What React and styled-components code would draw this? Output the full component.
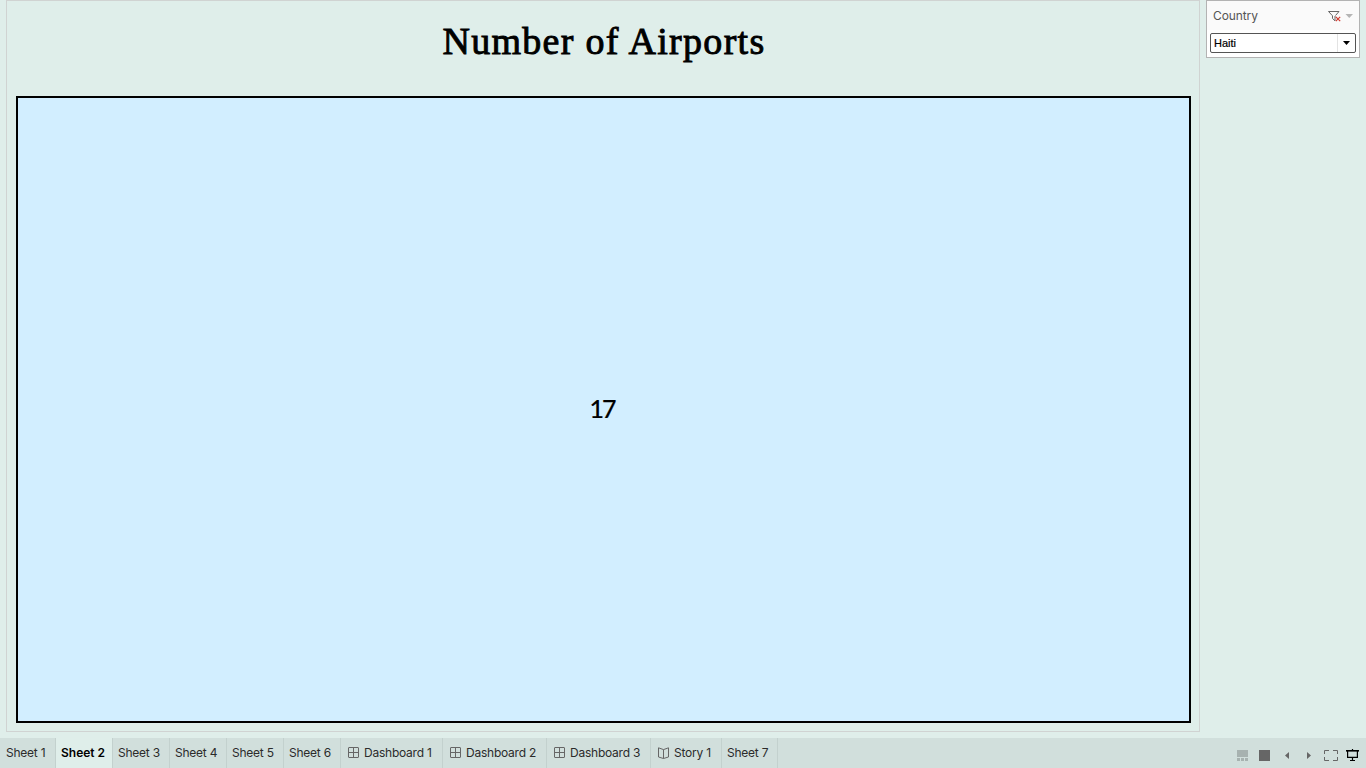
import React from 'react';
import styled, { createGlobalStyle } from 'styled-components';

const Global = createGlobalStyle`
  * { box-sizing: border-box; }
  body { margin: 0; background: #dfeeea; font-family: Inter, "Liberation Sans", sans-serif; overflow: hidden; }
  svg { display: block; flex: none; }
`;
const Page = styled.div`
  width: 1366px; height: 768px; display: flex; flex-direction: column; background: #dfeeea;
`;
const Content = styled.main`
  height: 732px; display: flex; align-items: flex-start; gap: 6px; padding-left: 6px; margin-bottom: 6px;
`;
const Sheet = styled.section`
  width: 1194px; height: 732px; border: 1px solid #d0d3d2; padding: 0 8px 8px 9px;
  display: flex; flex-direction: column;
`;
const Title = styled.h1`
  margin: 0; height: 95px; padding: 18px 0 0 1px; text-align: center; white-space: nowrap;
  font: 400 38px/44px "Liberation Serif", serif; letter-spacing: 1.3px; color: #000;
  -webkit-text-stroke: 0.9px #000;
`;
const Plot = styled.div`
  flex: 1; border: 2px solid #000; background: #d2eeff; display: flex; align-items: center; justify-content: center;
  padding: 0 3px 4px 0;
`;
const Value = styled.span`
  font: 500 25px/30px Lato, sans-serif; color: #000; letter-spacing: -2px; -webkit-text-stroke: 0.15px #000;
`;
const Filter = styled.aside`
  width: 154px; height: 58px; background: #fff; border: 1px solid #b3b3b3;
`;
const FilterHead = styled.div`
  height: 29px; background: #fafafa; padding: 0 6px; display: flex; align-items: center; color: #555; font-size: 12px;
  span { flex: 1; letter-spacing: -0.1px; }
`;
const Select = styled.div`
  width: 146px; height: 20px; margin: 3px 0 0 3px; border: 1px solid #555; border-radius: 2px;
  display: flex; align-items: stretch; font: 11px/18px "Liberation Sans", sans-serif; color: #000;
  span { flex: 1; padding-left: 3px; -webkit-text-stroke: 0.2px #000; }
`;
const Arrow = styled.div`
  width: 18px; border-left: 1px solid #e3e3e3; display: flex; align-items: center; justify-content: center;
`;
const Footer = styled.footer`
  height: 30px; background: #d1dfdc; display: flex; justify-content: space-between;
`;
const Tabs = styled.nav`display: flex;`;
const Tab = styled.div`
  width: ${p => p.$w}px; height: 30px; padding-left: ${p => p.$pad}px; border-right: 1px solid #c3d1ce;
  display: flex; align-items: center; gap: 5px; padding-bottom: 1px; white-space: nowrap;
  background: ${p => (p.$active ? '#dfeeea' : 'transparent')};
  color: ${p => (p.$active ? '#000' : '#2b2b2b')};
  font-size: 12px; font-weight: ${p => (p.$active ? 600 : 400)}; letter-spacing: ${p => (p.$active ? 0 : -0.23)}px;
`;
const Controls = styled.div`padding-top: 9px; width: 140px;`;

const GridIcon = () => (
  <svg width="11" height="11" viewBox="0 0 11 11" fill="none" stroke="#666">
    <rect x=".5" y=".5" width="10" height="10" rx=".5" /><path d="M5.5 0v11M0 5.5h11" />
  </svg>
);
const BookIcon = () => (
  <svg width="11" height="12" viewBox="0 0 11 12" fill="none" stroke="#666">
    <path d="M.5.8V10l5 1.5 5-1.5V.8L5.5 2.6ZM5.5 2.6v8.9" />
  </svg>
);

const tabs = [
  ['Sheet 1', 56, 6], ['Sheet 2', 57, 5], ['Sheet 3', 57, 5], ['Sheet 4', 57, 5], ['Sheet 5', 57, 5], ['Sheet 6', 57, 5],
  ['Dashboard 1', 102, 7, GridIcon], ['Dashboard 2', 104, 7, GridIcon], ['Dashboard 3', 104, 7, GridIcon],
  ['Story 1', 71, 7, BookIcon], ['Sheet 7', 56, 5],
];

export default function App() {
  return (
    <Page>
      <Global />
      <Content>
        <Sheet>
          <Title>Number of Airports</Title>
          <Plot><Value>17</Value></Plot>
        </Sheet>
        <Filter>
          <FilterHead>
            <span>Country</span>
            <svg width="26" height="12" viewBox="0 0 26 12" fill="none">
              <path d="M1.5 1.5H12L8.5 5.5M1.5 1.5L5.5 5.8V8.5L8 10.8V6" stroke="#666" />
              <path d="M8.800 6.800l4.400 4.400M13.200 6.800l-4.400 4.400" stroke="#d33c32" strokeWidth="1.2" />
              <path d="M18.500 4h7.500l-3.750 4z" fill="#b5b5b5" />
            </svg>
          </FilterHead>
          <Select>
            <span>Haiti</span>
            <Arrow><svg width="7" height="4" viewBox="0 0 7 4"><path d="M0 0h7L3.5 4z" /></svg></Arrow>
          </Select>
        </Filter>
      </Content>
      <Footer>
        <Tabs>
          {tabs.map(([name, w, pad, Icon]) => (
            <Tab key={name} $w={w} $pad={pad} $active={name === 'Sheet 2'}>{Icon && <Icon />}<span>{name}</span></Tab>
          ))}
        </Tabs>
        <Controls>
          <svg width="140" height="20" viewBox="0 0 140 20" fill="none">
            <path d="M11 3h11v7H11zM11 11h3v3h-3zM15 11h3v3h-3zM19 11h3v3h-3z" fill="#a7b2b0" />
            <path d="M33 3h11v11H33z" fill="#666" />
            <path d="M63 5v7l-4-3.5zM81 5v7l4-3.5z" fill="#666" />
            <path d="M98.5 7v-3.5h4.5M107 3.500h4.500v3.500M111.500 10v3.500h-4.500M103 13.500h-4.500v-3.500" stroke="#666" />
            <path d="M126.500 2v2M121.600 4v6.400h9.800V4M126.500 10v3M124 13.500h5" stroke="#000" strokeWidth="1.200" />
            <path d="M120 3h13v1.600h-13z" fill="#000" />
          </svg>
        </Controls>
      </Footer>
    </Page>
  );
}
